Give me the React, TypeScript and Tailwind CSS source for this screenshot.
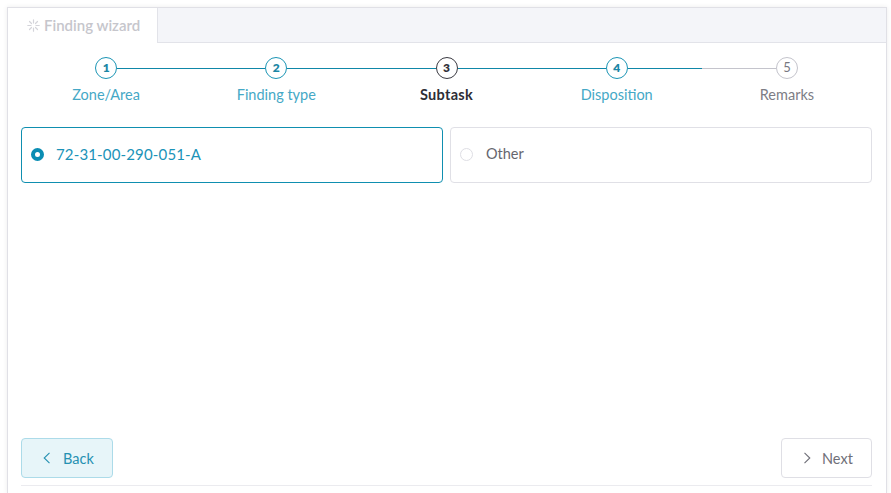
import React from "react";

type StepState = "done" | "current" | "todo";

const steps: {label: string; state: StepState; left: string; right: string}[] = [
    {label: "Zone/Area", state: "done", left: "bg-transparent", right: "bg-[#0f87a8]"},
    {label: "Finding type", state: "done", left: "bg-[#0f87a8]", right: "bg-[#0f87a8]"},
    {label: "Subtask", state: "current", left: "bg-[#0f87a8]", right: "bg-[#0f87a8]"},
    {label: "Disposition", state: "done", left: "bg-[#0f87a8]", right: "bg-[#0f87a8]"},
    {label: "Remarks", state: "todo", left: "bg-[#c4c4cc]", right: "bg-transparent"},
];

function Step(props: {index: number; label: string; state: StepState; left: string; right: string}) {
    const circle = {
        done: "border-[#1b95b5] text-[#1b87a6] font-extrabold text-[12px]",
        current: "border-[#3a3a42] text-[#33333b] font-extrabold text-[12px]",
        todo: "border-[#c4c4cc] text-[#77777f] font-normal text-[13px]",
    }[props.state];
    const label = {
        done: "text-[#45a8c6]",
        current: "text-[#2e2e36] font-bold tracking-[0.3px]",
        todo: "text-[#7d7d85]",
    }[props.state];

    return (
        <div className="flex-1 flex flex-col items-center">
            <div className="w-full flex items-center">
                <div className={`flex-1 h-px ${props.left}`} />
                <div className={`w-[22px] h-[22px] rounded-full border bg-white flex items-center justify-center shrink-0 ${circle}`}>
                    {props.index}
                </div>
                <div className={`flex-1 h-px ${props.right}`} />
            </div>
            <div className={`mt-[6px] text-[14.5px] leading-[20px] ${label}`}>{props.label}</div>
        </div>
    );
}

function Chevron(props: {dir: "left" | "right"; color: string}) {
    return (
        <svg width="8" height="12" viewBox="0 0 8 12" fill="none" stroke={props.color} strokeWidth="1.1">
            <path d={props.dir === "left" ? "M6.5 .8 1.2 6l5.3 5.2" : "M1.5 .8 6.8 6l-5.3 5.2"} />
        </svg>
    );
}

function Spinner() {
    return (
        <svg width="13" height="13" viewBox="0 0 13 13" stroke="#d4d4da" strokeWidth="1.2" strokeLinecap="round">
            <path d="M6.5 .8v3.2M6.5 9v3.2M.8 6.5H4M9 6.5h3.2M2.5 2.5l2 2M8.5 8.5l2 2M10.5 2.5l-2 2M4.5 8.5l-2 2" />
        </svg>
    );
}

export default function App() {
    return (
        <div className="w-[891px] h-[493px] bg-white overflow-hidden pt-[7px] pl-[7px] pr-[4px] font-['Lato','Noto_Sans',sans-serif]">
            <div className="h-[486px] border-x border-t border-[#e0e0e6] flex flex-col shadow-[0_0_5px_rgba(0,0,0,0.08)]">
                <div className="h-[35px] shrink-0 flex bg-[#f4f5f9] border-b border-[#e2e3e9]">
                    <div className="w-[150px] h-[35px] bg-white border-r border-[#e2e3e9] flex items-center pl-[19px] gap-[4px] text-[15px] font-semibold text-[#c6c6cc]">
                        <Spinner />
                        Finding wizard
                    </div>
                </div>
                <div className="flex-1 flex flex-col pl-[13px] pr-[14px] pt-[14px]">
                    <div className="flex">
                        {steps.map((s, i) => (
                            <Step key={s.label} index={i + 1} {...s} />
                        ))}
                    </div>
                    <div className="mt-[22px] flex gap-[7px]">
                        <div className="flex-1 h-[56px] rounded-[4px] border border-[#0f8fb0] flex items-center pl-[9px] pb-[2px]">
                            <div className="w-[13px] h-[13px] rounded-full border-[4px] border-[#0a8db3] bg-white" />
                            <span className="ml-[12px] text-[15px] text-[#1b93b8] tracking-[0.15px]">72-31-00-290-051-A</span>
                        </div>
                        <div className="flex-1 h-[56px] rounded-[4px] border border-[#e0e0e6] flex items-center pl-[9px] pb-[2px]">
                            <div className="w-[13px] h-[13px] rounded-full border border-[#dedee4] bg-white" />
                            <span className="ml-[13px] text-[14.5px] leading-[20px] mb-px text-[#66666e]">Other</span>
                        </div>
                    </div>
                    <div className="mt-auto flex justify-between pb-[7px] border-b border-[#ebebef]">
                        <button className="w-[92px] h-[40px] rounded-[4px] border border-[#acdbe9] bg-[#e7f5f9] flex items-center pl-[21px] gap-[12px] text-[14.5px] text-[#2691b2]">
                            <Chevron dir="left" color="#2691b2" />
                            <span className="mt-px">Back</span>
                        </button>
                        <button className="w-[91px] h-[40px] rounded-[4px] border border-[#dfdfe5] bg-white flex items-center pl-[21px] gap-[11px] text-[14.5px] text-[#6f6f78]">
                            <Chevron dir="right" color="#6f6f78" />
                            <span className="mt-px">Next</span>
                        </button>
                    </div>
                    <div className="h-[7px] shrink-0" />
                </div>
            </div>
        </div>
    );
}
